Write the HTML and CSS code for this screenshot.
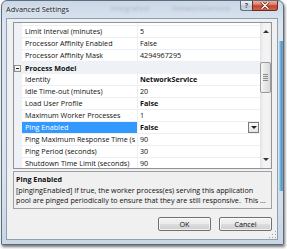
FILE: index.html
```html
<!DOCTYPE html>
<html lang="en">
<head>
  <meta charset="UTF-8">
  <title>Advanced Settings</title>
  <link rel="stylesheet" href="styles.css">
</head>
<body>
  <div class="window">
    <!-- Glass title bar -->
    <div class="titlebar">
      <span class="title">Advanced Settings</span>
      <span class="ghost ghost-a">Integrated</span>
      <span class="ghost ghost-b">NetworkService</span>
      <div class="caption">
        <span class="cap-btn help">?</span>
        <span class="cap-btn close">
          <svg width="10" height="7" viewBox="0 0 10 7"><path d="M2 0.5 L8 6.5 M8 0.5 L2 6.5" stroke="#5a1a10" stroke-width="2.6" stroke-linecap="round"/><path d="M2 0.5 L8 6.5 M8 0.5 L2 6.5" stroke="#fff" stroke-width="1.4" stroke-linecap="round"/></svg>
        </span>
      </div>
    </div>

    <div class="client">
      <!-- Property grid -->
      <div class="grid">
        <div class="rows">
          <div class="row spacer"><div class="name"></div><div class="value"></div></div>
          <div class="row"><div class="name">Limit Interval (minutes)</div><div class="value">5</div></div>
          <div class="row"><div class="name">Processor Affinity Enabled</div><div class="value">False</div></div>
          <div class="row"><div class="name">Processor Affinity Mask</div><div class="value">4294967295</div></div>
          <div class="row category"><span class="toggle"></span>Process Model</div>
          <div class="row"><div class="name">Identity</div><div class="value bold">NetworkService</div></div>
          <div class="row"><div class="name">Idle Time-out (minutes)</div><div class="value">20</div></div>
          <div class="row"><div class="name">Load User Profile</div><div class="value bold">False</div></div>
          <div class="row"><div class="name">Maximum Worker Processes</div><div class="value">1</div></div>
          <div class="row selected">
            <div class="name">Ping Enabled</div>
            <div class="value bold"><span class="value-text">False</span><span class="dropdown"></span></div>
          </div>
          <div class="row"><div class="name">Ping Maximum Response Time (s</div><div class="value">90</div></div>
          <div class="row"><div class="name">Ping Period (seconds)</div><div class="value">30</div></div>
          <div class="row"><div class="name">Shutdown Time Limit (seconds)</div><div class="value">90</div></div>
        </div>
        <div class="scrollbar">
          <div class="arrow"><span class="tri up"></span></div>
          <div class="track"><div class="thumb"></div></div>
          <div class="arrow"><span class="tri down"></span></div>
        </div>
      </div>

      <!-- Description panel -->
      <div class="desc">
        <div class="desc-title">Ping Enabled</div>
        <div class="desc-line">[pingingEnabled] If true, the worker process(es) serving this application</div>
        <div class="desc-line">pool are pinged periodically to ensure that they are still responsive.&nbsp; This ...</div>
      </div>

      <div class="buttons">
        <button class="btn">OK</button>
        <button class="btn">Cancel</button>
      </div>
      <span class="grip"></span>
    </div>
  </div>
</body>
</html>
```

FILE: styles.css
```css
/* Reset */
* {
  margin: 0;
  padding: 0;
  box-sizing: border-box;
}
body {
  width: 287px;
  height: 249px;
  overflow: hidden;
  background: #fff;
  font-family: "Open Sans", "Noto Sans", sans-serif;
  font-size: 7.2px;
  color: #111;
}

/* Window frame */
.window {
  margin-left: 1px;
  width: 283px;
  height: 245px;
  border: 1px solid #5d6d7e;
  border-radius: 6px 6px 1px 1px;
  padding: 0 5px 4px 4px;
  display: flex;
  flex-direction: column;
  background:
    linear-gradient(to right, #b4dcef, #4d97c9 60%, #8ea9c0) right 0 top 40px / 4px 150px no-repeat,
    linear-gradient(#cad7e6, #dce6f1 10%, #d9e4ef 70%, #c9d6e4);
  box-shadow: 1px 2px 3px rgba(0, 0, 0, 0.55);
}

/* Title bar */
.titlebar {
  position: relative;
  height: 17px;
  display: flex;
  align-items: flex-start;
}
.title {
  line-height: 16px;
  font-size: 7.4px;
  color: #1b1b1b;
  text-shadow: 0 0 3px #fff;
}
.ghost {
  position: absolute;
  top: 1px;
  font-size: 8px;
  line-height: 12px;
  color: rgba(50, 60, 80, 0.22);
  filter: blur(0.8px);
}
.ghost-a { left: 104px; }
.ghost-b { left: 166px; }

.caption {
  margin-left: auto;
  display: flex;
}
.cap-btn {
  height: 10px;
  display: flex;
  align-items: center;
  justify-content: center;
  border: 1px solid #5f6f80;
  border-top: none;
}
.help {
  width: 12px;
  border-right: none;
  border-radius: 0 0 0 3px;
  font-size: 7px;
  font-weight: bold;
  color: #44505e;
  background: linear-gradient(#eef2f6, #d3dce6 48%, #bac7d5 52%, #ccd7e3);
}
.close {
  width: 26px;
  border-color: #6b2b20;
  border-radius: 0 0 3px 0;
  background: linear-gradient(#eab0a3, #d87662 45%, #c3432b 52%, #d4644c);
}

/* Client area */
.client {
  position: relative;
  height: 222px;
  border: 1px solid #8e9fb3;
  background: #f0f0f0;
  padding: 3px 5px 0 6px;
  display: flex;
  flex-direction: column;
}

/* Property grid */
.grid {
  height: 147px;
  border: 1px solid #8d949c;
  background: #fff;
  display: flex;
}
.rows {
  flex: 1;
  overflow: hidden;
}
.row {
  height: 12px;
  display: flex;
  padding-left: 8px;
  background: #eef1f6;
  line-height: 11px;
  white-space: nowrap;
}
.row.spacer {
  height: 3px;
}
.name {
  width: 115px;
  padding-left: 3px;
  overflow: hidden;
  background: #fff;
  border-bottom: 1px solid #eceff4;
}
.value {
  flex: 1;
  display: flex;
  align-items: flex-start;
  padding-left: 2px;
  overflow: hidden;
  background: #fff;
  border-left: 1px solid #eceff4;
  border-bottom: 1px solid #eceff4;
}
.value.bold {
  font-weight: bold;
}
.value-text {
  flex: 1;
}
.row.selected .name {
  background: #3399ff;
  color: #fff;
}
.row.category {
  padding-left: 0;
  align-items: center;
  font-weight: bold;
}
.toggle {
  position: relative;
  width: 7px;
  height: 7px;
  margin-right: 4px;
  border: 1px solid #8f8f8f;
  background: linear-gradient(#fff, #e8e8e8);
}
.toggle::after {
  content: "";
  position: absolute;
  left: 1px;
  top: 2px;
  width: 3px;
  height: 1px;
  background: #222;
}
.dropdown {
  width: 11px;
  height: 11px;
  margin-right: 1px;
  border: 1px solid #7a7a7a;
  background: linear-gradient(#fafafa, #e4e4e4);
  display: flex;
  align-items: center;
  justify-content: center;
}
.dropdown::after {
  content: "";
  border-left: 3px solid transparent;
  border-right: 3px solid transparent;
  border-top: 3px solid #222;
}

/* Scrollbar */
.scrollbar {
  width: 11px;
  display: flex;
  flex-direction: column;
  background: linear-gradient(to right, #e2e2e2, #f2f2f2 30%, #f4f4f4 80%, #e9e9e9);
}
.arrow {
  height: 17px;
  display: flex;
  align-items: center;
  justify-content: center;
}
.tri {
  border-left: 3px solid transparent;
  border-right: 3px solid transparent;
}
.tri.up { border-bottom: 3px solid #333; }
.tri.down { border-top: 3px solid #333; }
.track {
  flex: 1;
}
.thumb {
  position: relative;
  margin-top: 22px;
  height: 31px;
  border: 1px solid #999;
  border-radius: 2px;
  background: linear-gradient(to right, #f6f6f6, #e6e6e6 50%, #d9d9d9);
}
.thumb::after {
  content: "";
  position: absolute;
  left: 2px;
  top: 11px;
  width: 5px;
  height: 7px;
  background: repeating-linear-gradient(#8c8c8c 0 1px, transparent 1px 2px);
}

/* Description panel */
.desc {
  margin-top: 2px;
  height: 38px;
  border: 1px solid #a0a0a0;
  padding: 2px 2px 0 2px;
  white-space: nowrap;
  overflow: hidden;
}
.desc-title {
  font-weight: bold;
  line-height: 11px;
}
.desc-line {
  line-height: 10px;
}

/* Buttons */
.buttons {
  margin-top: 8px;
  display: flex;
  justify-content: flex-end;
  gap: 8px;
}
.btn {
  width: 53px;
  height: 14px;
  font-family: inherit;
  font-size: 7.2px;
  color: #111;
  border: 1px solid #707070;
  border-radius: 2px;
  background: linear-gradient(#f2f2f2, #ebebeb 48%, #dddddd 52%, #cfcfcf);
  box-shadow: inset 0 0 0 1px rgba(255, 255, 255, 0.7);
}

/* Size grip */
.grip {
  position: absolute;
  right: 1px;
  bottom: 1px;
  width: 8px;
  height: 8px;
  background: radial-gradient(circle, #9aa4ae 0.7px, transparent 1px) 0 0 / 3px 3px;
  clip-path: polygon(100% 0, 100% 100%, 0 100%);
}
```
